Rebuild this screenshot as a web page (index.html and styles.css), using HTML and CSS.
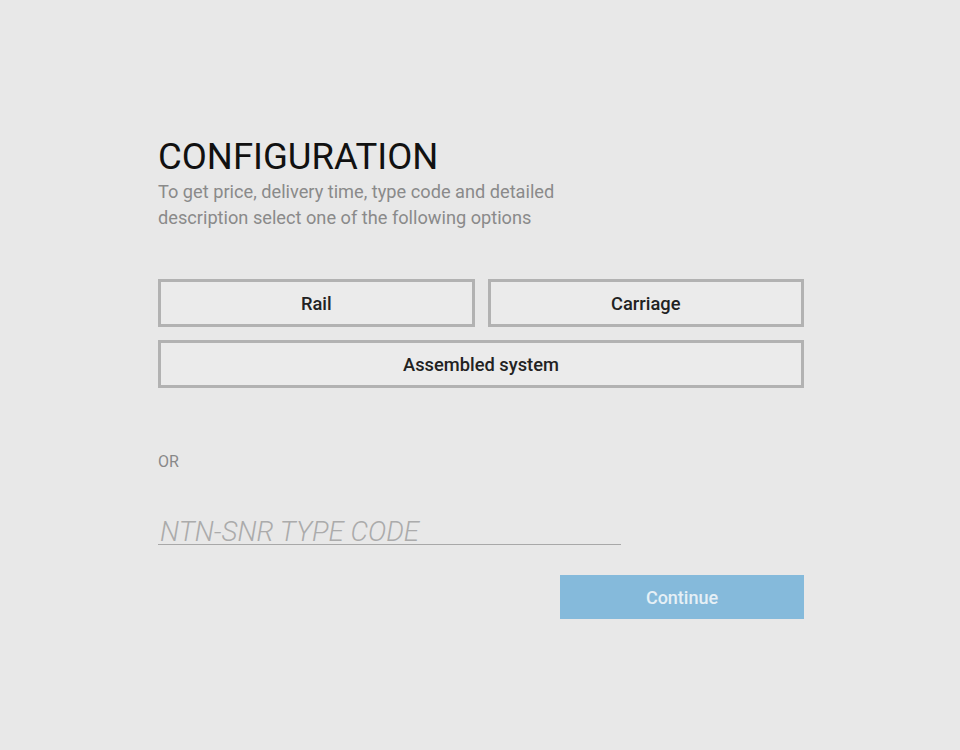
FILE: index.html
```html
<!DOCTYPE html>
<html>
<head>
<meta charset="utf-8">
<link rel="stylesheet" href="styles.css">
</head>
<body>
<div class="page">
  <div class="panel">
    <h1 class="title">CONFIGURATION</h1>
    <p class="subtitle">To get price, delivery time, type code and detailed<br>description select one of the following options</p>
    <div class="options">
      <button class="opt">Rail</button>
      <button class="opt">Carriage</button>
      <button class="opt wide">Assembled system</button>
    </div>
    <div class="or">OR</div>
    <div class="field">
      <input class="code" type="text" placeholder="NTN-SNR TYPE CODE">
    </div>
    <div class="actions">
      <button class="continue">Continue</button>
    </div>
  </div>
</div>
</body>
</html>
```
FILE: styles.css
```css
html, body {
  margin: 0;
  padding: 0;
  background: #e8e8e8;
  font-family: Roboto, "Liberation Sans", sans-serif;
}
.page {
  width: 960px;
  height: 750px;
  padding-top: 137px;
  box-sizing: border-box;
}
.panel {
  width: 646px;
  margin-left: 158px;
}
.title {
  margin: 0;
  font-size: 36.5px;
  font-weight: 400;
  color: #111;
  line-height: 40px;
}
.subtitle {
  margin: 2px 0 0;
  font-size: 18.2px;
  line-height: 26px;
  color: #8a8a8a;
}
.options {
  margin-top: 48px;
  display: grid;
  grid-template-columns: 1fr 1fr;
  column-gap: 13px;
  row-gap: 13px;
}
.opt {
  height: 48px;
  border: 3px solid #b2b2b2;
  background: #ebebeb;
  font-family: Roboto, "Liberation Sans", sans-serif;
  font-size: 18.3px;
  font-weight: 500;
  color: #222;
  padding: 0;
}
.opt.wide {
  grid-column: 1 / 3;
}
.or {
  margin-top: 64px;
  font-size: 16px;
  color: #888;
  line-height: 20px;
}
.field {
  margin-top: 38px;
  width: 463px;
}
.code {
  width: 100%;
  box-sizing: border-box;
  border: none;
  border-bottom: 1px solid #a8a8a8;
  background: transparent;
  font-family: Roboto, "Liberation Sans", sans-serif;
  font-size: 27.7px;
  font-weight: 300;
  font-style: italic;
  padding: 8px 0 0 2px;
  height: 35px;
  outline: none;
}
.code::placeholder {
  color: #ababab;
}
.actions {
  margin-top: 30px;
  display: flex;
  justify-content: flex-end;
}
.continue {
  width: 244px;
  height: 44px;
  border: none;
  background: #85badb;
  color: #e6f0f6;
  font-family: Roboto, "Liberation Sans", sans-serif;
  font-size: 18px;
  font-weight: 500;
}
```
